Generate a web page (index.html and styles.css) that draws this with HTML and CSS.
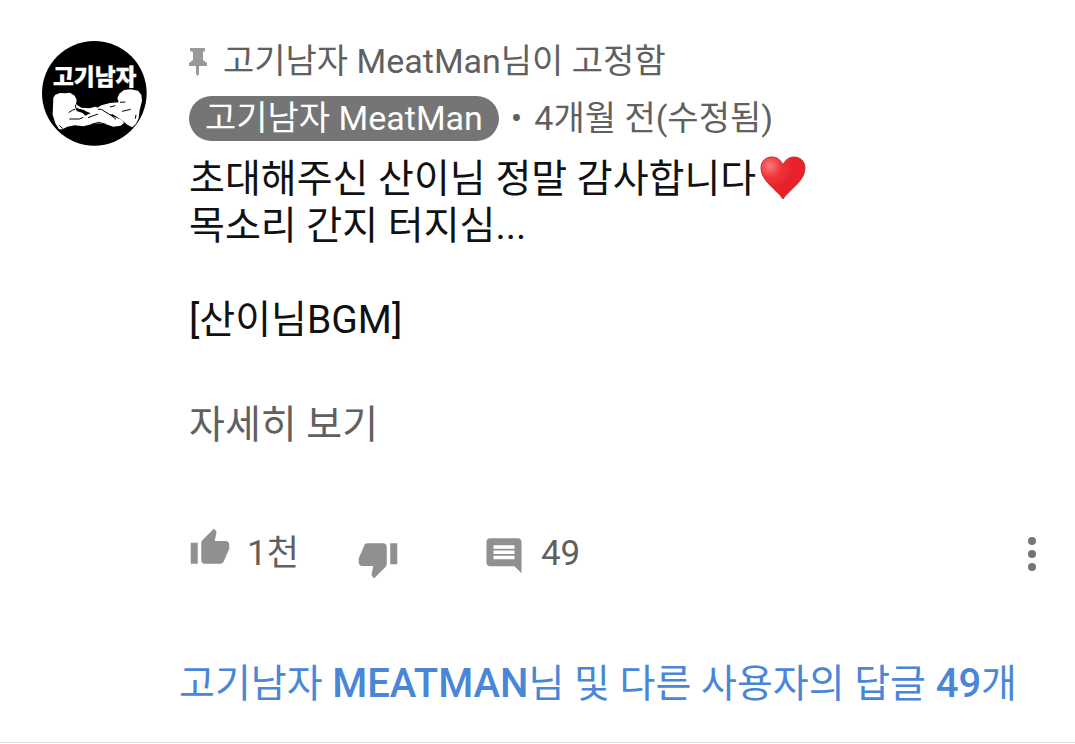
FILE: index.html
```html
<!DOCTYPE html>
<html lang="ko">

<head>
  <meta charset="UTF-8">
  <meta name="viewport" content="width=device-width, initial-scale=1.0">
  <title>고기남자 MeatMan</title>
  <link rel="stylesheet" href="styles.css">
</head>

<body>

<main>
  <article class="comment">
    <svg class="avatar" viewBox="36 33 315 315" role="img" aria-label="고기남자">
      <circle cx="193" cy="190" r="157" fill="#000"/>
      <text class="avatar-text" x="194" y="164" text-anchor="middle">고기남자</text>
      <!-- left arm -->
      <path fill="#fff" d="M70 203L76 194L90 189L106 190L120 188L134 197L140 209L138 223L154 233L178 235L196 230L214 238L246 258L276 270L282 279L272 287L250 290L228 283L206 280L184 283L160 289L134 286L112 290L97 298L87 298L76 280L68 254Z"/>
      <!-- right arm -->
      <path fill="#fff" d="M268 191L282 180L302 178L324 182L334 194L336 212L329 240L326 265L318 281L307 292L292 284L276 271L248 253L228 256L206 265L184 276L166 281L156 278L174 263L168 256L184 250L196 238L214 226L240 219L266 217L262 204Z"/>
      <g fill="none" stroke="#000" stroke-width="3">
        <path d="M116 248L128 240L136 238M118 267L148 267L160 262M136 224L138 236L164 242M88 286L98 296"/>
        <path d="M204 238L214 238L246 258L258 268M240 231L256 227M276 244L302 238M270 217L286 216M316 266L318 254M174 263L204 252M184 283L206 277L228 283"/>
      </g>
      <path d="M138 234L166 243L182 250L166 257L158 249L140 243Z"/>
    </svg>

    <div class="content">
      <div class="pinned">
        <svg class="pin" viewBox="0 0 18 28" aria-hidden="true">
          <path d="M1 0h15v3l-2 1v8l4 3v3h-8v8l-1 2-2-2v-8H0v-3l4-3V4L1 3z"/>
        </svg>
        <span>고기남자 MeatMan님이 고정함</span>
      </div>
      <div class="byline">
        <a class="author" href="#channel">고기남자 MeatMan</a>
        <span>•</span>
        <span>4개월 전(수정됨)</span>
      </div>
      <p class="text">초대해주신 산이님 정말 감사합니다<svg class="heart" viewBox="0 0 46 44" role="img" aria-label="하트">
          <defs>
            <radialGradient id="heartFill" cx="0.2" cy="0.22" r="0.55">
              <stop offset="0" stop-color="#f77"/>
              <stop offset="0.5" stop-color="#f03338"/>
              <stop offset="1" stop-color="#e8202a"/>
            </radialGradient>
          </defs>
          <path fill="url(#heartFill)" stroke="#c33136" d="M23 43C17 34 1 25 1 12C1 5 6 1 12 1C17 1 21 4 23 9C25 4 29 1 34 1C40 1 45 5 45 12C45 25 29 34 23 43z"/>
        </svg><br>목소리 간지 터지심...<br><br>[산이님BGM]</p>
      <button class="read-more" type="button">자세히 보기</button>

      <div class="actions">
        <button class="like" type="button" aria-label="좋아요 1천">
          <svg class="icon" viewBox="0 0 24 24" aria-hidden="true"><path d="M1 21h4V9H1v12zm22-11c0-1.1-.9-2-2-2h-6.31l.95-4.57.03-.32c0-.41-.17-.79-.44-1.06L14.17 1 7.59 7.59C7.22 7.95 7 8.45 7 9v10c0 1.1.9 2 2 2h9c.83 0 1.54-.5 1.84-1.22l3.02-7.05c.09-.23.14-.47.14-.73v-2z"/></svg>
          <span>1천</span>
        </button>
        <button class="dislike" type="button" aria-label="싫어요">
          <svg class="icon" viewBox="0 0 24 24" aria-hidden="true"><path d="M15 3H6c-.83 0-1.54.5-1.84 1.22l-3.02 7.05c-.09.23-.14.47-.14.73v2c0 1.1.9 2 2 2h6.31l-.95 4.57-.03.32c0 .41.17.79.44 1.06L9.83 23l6.59-6.59c.36-.36.58-.86.58-1.41V5c0-1.1-.9-2-2-2zm4 0v12h4V3h-4z"/></svg>
        </button>
        <button class="replies" type="button" aria-label="답글 49">
          <svg class="icon" viewBox="0 0 24 24" aria-hidden="true"><path d="M22 5c0-1.1-.9-2-2-2H4c-1.1 0-2 .9-2 2v12c0 1.1.9 2 2 2h14l4 4V5zm-4 10H6v-2h12v2zm0-3H6v-2h12v2zm0-3H6V7h12v2z"/></svg>
          <span>49</span>
        </button>
        <button class="more" type="button" aria-label="더보기">
          <svg viewBox="0 0 10 36" aria-hidden="true"><circle cx="5" cy="5" r="4"/><circle cx="5" cy="18" r="4"/><circle cx="5" cy="31" r="4"/></svg>
        </button>
      </div>
    </div>
  </article>

  <a class="view-replies" href="#replies">고기남자 <b>MEATMAN</b>님 및 다른 사용자의 답글 <b>49</b>개</a>
</main>

</body>

</html>
```

FILE: styles.css
```css
body {
  margin: 0;
  background: #fff;
  color: #606060;
  font-family: Roboto, "Noto Sans CJK KR", sans-serif;
  font-size: 34px;
  line-height: 45px;
}

main {
  border-bottom: 1px solid #dcdcdc;
}

button {
  display: flex;
  padding: 0;
  border: 0;
  background: none;
  color: inherit;
  font: inherit;
  cursor: pointer;
}

a {
  text-decoration: none;
}

.comment {
  display: flex;
  align-items: flex-start;
  gap: 42px;
  padding: 39px 38px 0 42px;
}

.avatar {
  flex: none;
  width: 105px;
  height: 105px;
  margin-top: 2px;
}

.avatar-text {
  fill: #fff;
  stroke: #fff;
  stroke-width: 1px;
  font-family: "Noto Sans CJK KR", sans-serif;
  font-size: 68px;
  font-weight: 900;
}

.content {
  flex: 1;
  min-width: 0;
}

.pinned {
  display: flex;
  align-items: center;
  gap: 16px;
}

.pin {
  width: 18px;
  height: 28px;
  fill: #999;
}

.byline {
  display: flex;
  align-items: center;
  gap: 12px;
  margin-top: 12px;
}

.author {
  padding: 0 16px;
  border-radius: 23px;
  background: #757575;
  color: #fff;
}

.text {
  margin: 15px 0 0;
  color: #111;
  font-size: 39px;
  line-height: 47px;
}

.heart {
  width: 46px;
  height: 44px;
  margin-left: 4px;
  vertical-align: -8px;
}

.read-more {
  margin-top: 58px;
  font-size: 39px;
  line-height: 47px;
}

.actions {
  display: flex;
  align-items: center;
  height: 53px;
  margin-top: 78px;
  font-size: 35px;
}

.icon {
  width: 42px;
  height: 42px;
  fill: #909090;
}

.like,
.replies {
  align-items: center;
  align-self: stretch;
  gap: 16px;
}

.like .icon {
  align-self: flex-start;
}

.dislike {
  align-self: flex-end;
  margin-left: 58px;
}

.replies {
  margin-left: 84px;
}

.more {
  margin-left: auto;
}

.more svg {
  width: 10px;
  height: 36px;
  fill: #757575;
}

.view-replies {
  display: block;
  padding: 80px 0 34px 179px;
  color: #4a86d8;
  font-size: 39px;
  line-height: 47px;
}

.view-replies b {
  font-size: 40px;
  font-weight: 500;
}
```
